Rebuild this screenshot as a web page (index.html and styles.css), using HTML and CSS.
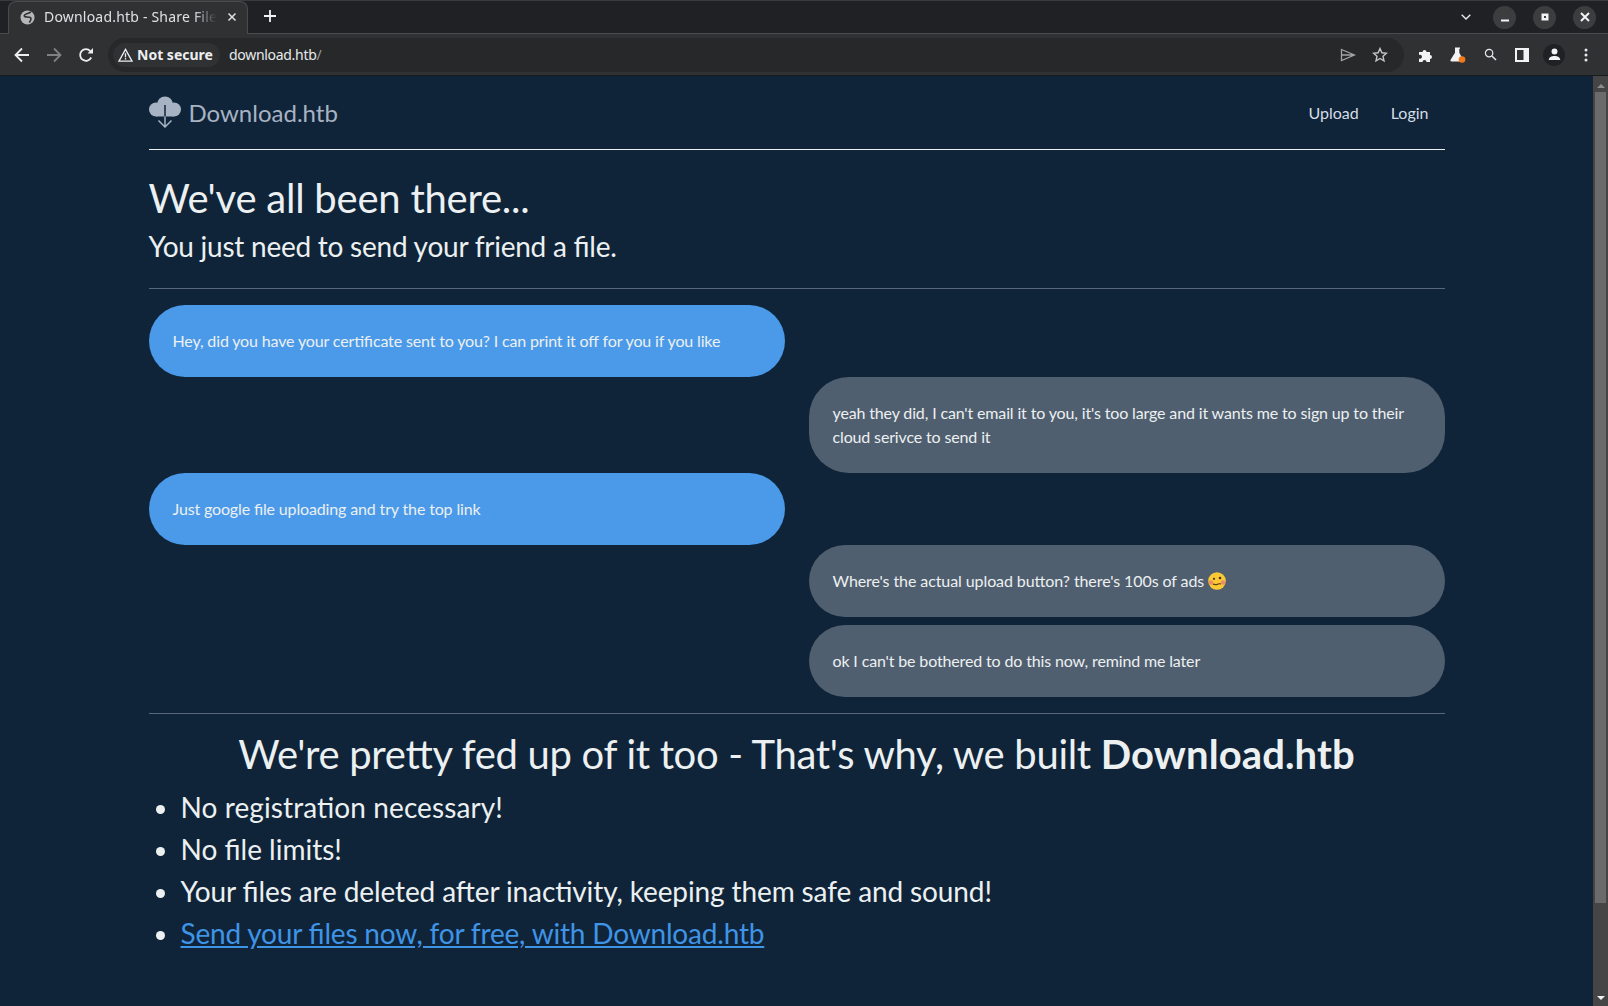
FILE: index.html
```html
<!DOCTYPE html>
<html lang="en">
<head>
    <meta charset="UTF-8">
    <meta name="viewport" content="width=device-width, initial-scale=1.0">
    <title>Download.htb - Share Files With Ease</title>
    <link rel="stylesheet" href="styles.css">
</head>
<body>
    <div class="browser-top">
        <div class="tab-strip">
            <div class="tab">
                <svg class="tab-globe" viewBox="0 0 16 16"><circle cx="8" cy="8" r="7.500" fill="#b5b7b9"/><path d="M11.500 2C9.500 4 5 3.500 4.500 6c0 2 4 1 6.500 2 1.500.6.500 3-1 5.500" fill="none" stroke="#2f3133" stroke-width="1.700"/></svg>
                <span class="tab-title">Download.htb - Share File</span>
                <svg class="tab-close" viewBox="0 0 10 10"><path d="M1.500 1.500l7 7M8.500 1.500l-7 7" stroke="#dfe1e3" stroke-width="1.500"/></svg>
            </div>
            <svg class="new-tab" viewBox="0 0 12 12"><path d="M6 0v12M0 6h12" stroke="#f1f3f4" stroke-width="1.800"/></svg>
            <div class="win-controls">
                <svg class="chevron" viewBox="0 0 10 6"><path d="M.7.7L5 5l4.300-4.300" fill="none" stroke="#e8eaed" stroke-width="1.400"/></svg>
                <div class="win-btn"><svg viewBox="0 0 10 10"><path d="M1 8.500h8" stroke="#f1f3f4" stroke-width="2"/></svg></div>
                <div class="win-btn"><svg viewBox="0 0 10 10"><path d="M1.500 1.500h7v7h-7z" fill="#f1f3f4"/><path d="M4 4h2v2H4z" fill="#3c3d3f"/></svg></div>
                <div class="win-btn"><svg viewBox="0 0 10 10"><path d="M1 1l8 8M9 1l-8 8" stroke="#f1f3f4" stroke-width="2"/></svg></div>
            </div>
        </div>
        <div class="toolbar">
            <svg class="nav-icon" viewBox="0 0 16 16"><path d="M15 8H2M8 1.500L1.500 8 8 14.500" fill="none" stroke="#eceef0" stroke-width="1.800"/></svg>
            <svg class="nav-icon" viewBox="0 0 16 16"><path d="M1 8h13M8 1.500L14.500 8 8 14.500" fill="none" stroke="#7f8183" stroke-width="1.800"/></svg>
            <svg class="nav-icon" viewBox="0 0 16 16"><path d="M13.200 10.500A5.800 5.800 0 1 1 12.300 4.100" fill="none" stroke="#eceef0" stroke-width="1.800"/><path d="M9.500 6.500H15V1z" fill="#eceef0"/></svg>
            <div class="omnibox">
                <div class="security">
                    <svg viewBox="0 0 16 15"><path d="M8 1.500L15 14H1z" fill="none" stroke="#eceef0" stroke-width="1.400"/><path d="M7.300 5.500h1.400v4.300H7.300zM7.300 10.800h1.400v1.400H7.300z" fill="#eceef0"/></svg>
                    <span>Not secure</span>
                </div>
                <span class="url">download.htb<span class="url-path">/</span></span>
                <div class="omni-icons">
                    <svg viewBox="0 0 16 14"><path d="M1.500 1.500L14.500 7 1.500 12.500zM1.500 7h13" fill="none" stroke="#a3a5a7" stroke-width="1.300"/></svg>
                    <svg viewBox="0 0 16 16"><path d="M8 1.500l1.900 4.300 4.600.4-3.500 3.100 1 4.600L8 11.500l-4 2.400 1-4.600L1.500 6.200l4.600-.4z" fill="none" stroke="#c4c6c8" stroke-width="1.400"/></svg>
                </div>
            </div>
            <div class="ext-icons">
                <svg class="ext-puzzle" viewBox="0 0 16 16"><path d="M1 5h3.500a2 2 0 1 1 4 0H12v3a2 2 0 1 1 0 4v3H8.500a2 2 0 1 0-4 0H1v-3.500a2 2 0 1 0 0-3.500z" fill="#f1f3f4"/></svg>
                <svg class="ext-flask" viewBox="0 0 16 16"><path d="M5 .5h5v1.300H9.300v4l3 5.500v3.200H1.500c-1 0-1.300-.9-.9-1.700L5 5.800v-4H5z" fill="#f1f3f4"/><circle cx="12" cy="12.500" r="3.300" fill="#f07a1c"/></svg>
                <svg class="ext-search" viewBox="0 0 14 14"><circle cx="5.500" cy="5.500" r="4" fill="none" stroke="#e8eaed" stroke-width="1.300"/><path d="M8.500 8.500l4.500 4.500" stroke="#e8eaed" stroke-width="1.500"/></svg>
                <svg class="ext-panel" viewBox="0 0 14 14"><path d="M0 0h14v14H0z" fill="#f1f3f4"/><path d="M2 2h6.500v10H2z" fill="#2f3133"/></svg>
                <div class="avatar"><svg viewBox="0 0 14 14"><circle cx="7" cy="3.700" r="3.200" fill="#f1f3f4"/><path d="M.8 13c0-3.200 3-4.500 6.200-4.500s6.200 1.300 6.200 4.500z" fill="#f1f3f4"/></svg></div>
                <svg class="ext-menu" viewBox="0 0 4 14"><circle cx="2" cy="2" r="1.500" fill="#e8eaed"/><circle cx="2" cy="7" r="1.500" fill="#e8eaed"/><circle cx="2" cy="12" r="1.500" fill="#e8eaed"/></svg>
            </div>
        </div>
    </div>

    <div class="viewport">
        <div class="page">
            <div class="container">
                <header class="site-header">
                    <a class="brand" href="#">
                        <svg class="brand-icon" viewBox="0 0 32 32">
                            <circle cx="16" cy="8.500" r="8" fill="#a7b3c2"/>
                            <circle cx="7" cy="13.500" r="7" fill="#a7b3c2"/>
                            <circle cx="25" cy="13.500" r="7" fill="#a7b3c2"/>
                            <path d="M7 12h18v8.500H7z" fill="#a7b3c2"/>
                            <path d="M16 9v11.500" stroke="#0f2439" stroke-width="1.500"/>
                            <path d="M16 20.500V31M9.500 24.500L16 31l6.500-6.500" fill="none" stroke="#a7b3c2" stroke-width="1.500"/>
                        </svg>
                        <span>Download.htb</span>
                    </a>
                    <nav class="site-nav">
                        <a href="#">Upload</a>
                        <a href="#">Login</a>
                    </nav>
                </header>

                <h1 class="hero-title">We've all been there...</h1>
                <h2 class="hero-sub">You just need to send your friend a file.</h2>
                <hr class="rule">

                <div class="chat">
                    <div class="row"><div class="bubble blue">Hey, did you have your certificate sent to you? I can print it off for you if you like</div></div>
                    <div class="row right"><div class="bubble grey">yeah they did, I can't email it to you, it's too large and it wants me to sign up to their cloud serivce to send it</div></div>
                    <div class="row"><div class="bubble blue">Just google file uploading and try the top link</div></div>
                    <div class="row right"><div class="bubble grey with-emoji">Where's the actual upload button? there's 100s of ads
                        <svg class="emoji" viewBox="0 0 18 18">
                            <circle cx="9" cy="9" r="8.800" fill="#fbc934"/>
                            <circle cx="3" cy="10.500" r="2.200" fill="#f28a6a"/>
                            <circle cx="15" cy="10.500" r="2.200" fill="#f28a6a"/>
                            <circle cx="6" cy="6.800" r="1.100" fill="#4a3410"/>
                            <circle cx="12" cy="6" r="1.300" fill="#4a3410"/>
                            <path d="M5 12.500c1.500-1.200 2 .8 3.500.2s2-1.500 4.500-.7" fill="none" stroke="#4a3410" stroke-width="1.100"/>
                        </svg>
                    </div></div>
                    <div class="row right last"><div class="bubble grey">ok I can't be bothered to do this now, remind me later</div></div>
                </div>
                <hr class="rule">

                <h3 class="pitch">We're pretty fed up of it too - That's why, we built <strong>Download.htb</strong></h3>
                <ul class="features">
                    <li>No registra&zwnj;tion necessary!</li>
                    <li>No file limits!</li>
                    <li>Your files are deleted after inac&zwnj;tivity, keeping them safe and sound!</li>
                    <li><a href="#">Send your files now, for free, with Download.htb</a></li>
                </ul>
            </div>
        </div>
        <div class="scrollbar">
            <div class="arrow-up"></div>
            <div class="thumb"></div>
            <div class="arrow-down"></div>
        </div>
    </div>
</body>
</html>
```

FILE: styles.css
```css
* {
    box-sizing: border-box;
}

html, body {
    height: 100%;
}

body {
    margin: 0;
    display: flex;
    flex-direction: column;
    overflow: hidden;
    font-family: "Lato", sans-serif;
    background-color: #0f2439;
}

svg {
    display: block;
    flex: none;
}

/* browser frame */
.browser-top {
    flex: none;
    font-family: "Noto Sans", sans-serif;
}

.tab-strip {
    height: 34px;
    display: flex;
    align-items: flex-end;
    background-color: #202124;
    border-top: 1px solid #3a3b3d;
    border-bottom: 1px solid #4a4b4d;
}

.tab {
    width: 240px;
    height: 33px;
    margin-left: 8px;
    margin-bottom: -1px;
    padding: 0 10px 2px 11px;
    display: flex;
    align-items: center;
    background-color: #2f3133;
    border: 1px solid #4a4b4d;
    border-bottom: 0;
    border-radius: 8px 8px 0 0;
}

.tab-globe {
    width: 15px;
    height: 15px;
}

.tab-title {
    flex: 1;
    min-width: 0;
    margin: -1px 0 0 9px;
    font-size: 14px;
    letter-spacing: 0.2px;
    color: #dfe1e3;
    white-space: nowrap;
    -webkit-mask-image: linear-gradient(to right, #000 85%, transparent 98%);
    mask-image: linear-gradient(to right, #000 85%, transparent 98%);
}

.tab-close {
    width: 10px;
    height: 10px;
    margin-left: 7px;
}

.new-tab {
    width: 12px;
    height: 12px;
    margin: 0 0 11px 16px;
}

.win-controls {
    margin-left: auto;
    height: 100%;
    display: flex;
    align-items: center;
    padding-right: 12px;
}

.chevron {
    width: 10px;
    height: 6px;
    margin-right: 22px;
}

.win-btn {
    width: 23px;
    height: 23px;
    margin-left: 17px;
    border-radius: 50%;
    background-color: #3c3d3f;
    display: flex;
    align-items: center;
    justify-content: center;
}

.chevron + .win-btn {
    margin-left: 0;
}

.win-btn svg {
    width: 10px;
    height: 10px;
}

.toolbar {
    height: 42px;
    padding: 0 0 0 14px;
    display: flex;
    align-items: center;
    background-color: #2f3133;
    border-bottom: 1px solid #1a1b1d;
}

.nav-icon {
    width: 16px;
    height: 16px;
    margin-right: 16px;
}

.omnibox {
    width: 1296px;
    height: 34px;
    margin-left: -2px;
    padding: 0 16px 0 5px;
    display: flex;
    align-items: center;
    background-color: #26282a;
    border-radius: 17px;
}

.security {
    width: 107px;
    height: 24px;
    padding-left: 5px;
    display: flex;
    align-items: center;
    gap: 4px;
    border-radius: 12px;
    background-color: #2f3133;
    font-size: 14px;
    font-weight: 700;
    color: #eceef0;
    white-space: nowrap;
}

.security svg {
    width: 15px;
    height: 14px;
}

.url {
    margin-left: 9px;
    font-size: 14px;
    letter-spacing: -0.3px;
    color: #e8eaed;
}

.url-path {
    color: #9a9c9e;
}

.omni-icons {
    margin-left: auto;
    display: flex;
    align-items: center;
    gap: 16px;
}

.omni-icons svg {
    width: 16px;
    height: 16px;
}

.ext-icons {
    margin-left: 6px;
    display: grid;
    grid-template-columns: repeat(6, 32px);
    align-items: center;
    justify-items: center;
}

.ext-puzzle, .ext-flask {
    width: 16px;
    height: 16px;
}

.ext-search {
    width: 13px;
    height: 13px;
}

.ext-panel {
    width: 14px;
    height: 14px;
}

.avatar {
    width: 22px;
    height: 22px;
    border-radius: 50%;
    background-color: #202124;
    display: flex;
    align-items: center;
    justify-content: center;
}

.avatar svg {
    width: 13px;
    height: 13px;
}

.ext-menu {
    width: 4px;
    height: 14px;
}

/* page */
.viewport {
    flex: 1;
    min-height: 0;
    display: flex;
}

.page {
    flex: 1;
    min-width: 0;
    overflow: hidden;
    color: #ecf0f1;
    font-feature-settings: "liga" 1;
}

.container {
    width: 1320px;
    margin: 0 auto;
    padding: 0 12px;
}

.site-header {
    height: 74px;
    margin-bottom: 24px;
    padding-bottom: 1px;
    display: flex;
    align-items: center;
    justify-content: space-between;
    border-bottom: 1px solid #ecf0f1;
}

.brand {
    display: flex;
    align-items: center;
    gap: 8px;
    font-size: 24px;
    color: #a7b3c2;
    text-decoration: none;
}

.brand-icon {
    width: 32px;
    height: 32px;
}

.site-nav {
    display: flex;
}

.site-nav a {
    padding: 8px 16px;
    font-size: 16px;
    color: #d5dde5;
    text-decoration: none;
}

.hero-title {
    margin: 0 0 3px;
    font-size: 40px;
    font-weight: 400;
    line-height: 48px;
    letter-spacing: -0.233px;
}

.hero-sub {
    margin: 0;
    font-size: 28px;
    font-weight: 400;
    line-height: 42px;
    letter-spacing: -0.244px;
}

.rule {
    margin: 16px 0;
    border: 0;
    border-top: 1px solid #58677a;
}

.hero-sub + .rule {
    margin-top: 21px;
}

.row {
    display: flex;
    justify-content: flex-start;
}

.row.right {
    justify-content: flex-end;
}

.row.last {
    margin-top: 8px;
}

.bubble {
    width: 636px;
    padding: 24px;
    font-size: 16px;
    line-height: 24px;
    letter-spacing: -0.144px;
    color: #ecf0f1;
    border-radius: 40px;
}

.bubble.blue {
    background-color: #4a9ae9;
}

.bubble.grey {
    background-color: #505f6f;
}

.bubble.with-emoji {
    letter-spacing: -0.09px;
}

.emoji {
    display: inline-block;
    width: 18px;
    height: 18px;
    vertical-align: -3px;
}

.pitch {
    margin: 0 0 8px;
    font-size: 40px;
    font-weight: 400;
    line-height: 48px;
    letter-spacing: -0.31px;
    text-align: center;
}

.pitch strong {
    letter-spacing: 0.1px;
}

.features {
    margin: 0;
    padding-left: 32px;
    font-size: 28px;
    line-height: 42px;
    letter-spacing: -0.115px;
}

.features li:first-child {
    letter-spacing: 0.09px;
}

.features li:nth-child(2) {
    letter-spacing: 0;
}

.features a {
    letter-spacing: -0.187px;
    color: #3f94e6;
}

/* fake scrollbar */
.scrollbar {
    width: 15px;
    flex: none;
    display: flex;
    flex-direction: column;
    align-items: center;
    background-color: #454545;
}

.thumb {
    width: 11px;
    height: 811px;
    margin-top: 4px;
    background-color: #6b6b6b;
}

.arrow-up {
    width: 0;
    height: 0;
    margin-top: 8px;
    border-left: 4px solid transparent;
    border-right: 4px solid transparent;
    border-bottom: 4px solid #8c8c8c;
}

.arrow-down {
    width: 0;
    height: 0;
    margin-top: auto;
    margin-bottom: 6px;
    border-left: 4px solid transparent;
    border-right: 4px solid transparent;
    border-top: 4px solid #f0f0f0;
}
```
